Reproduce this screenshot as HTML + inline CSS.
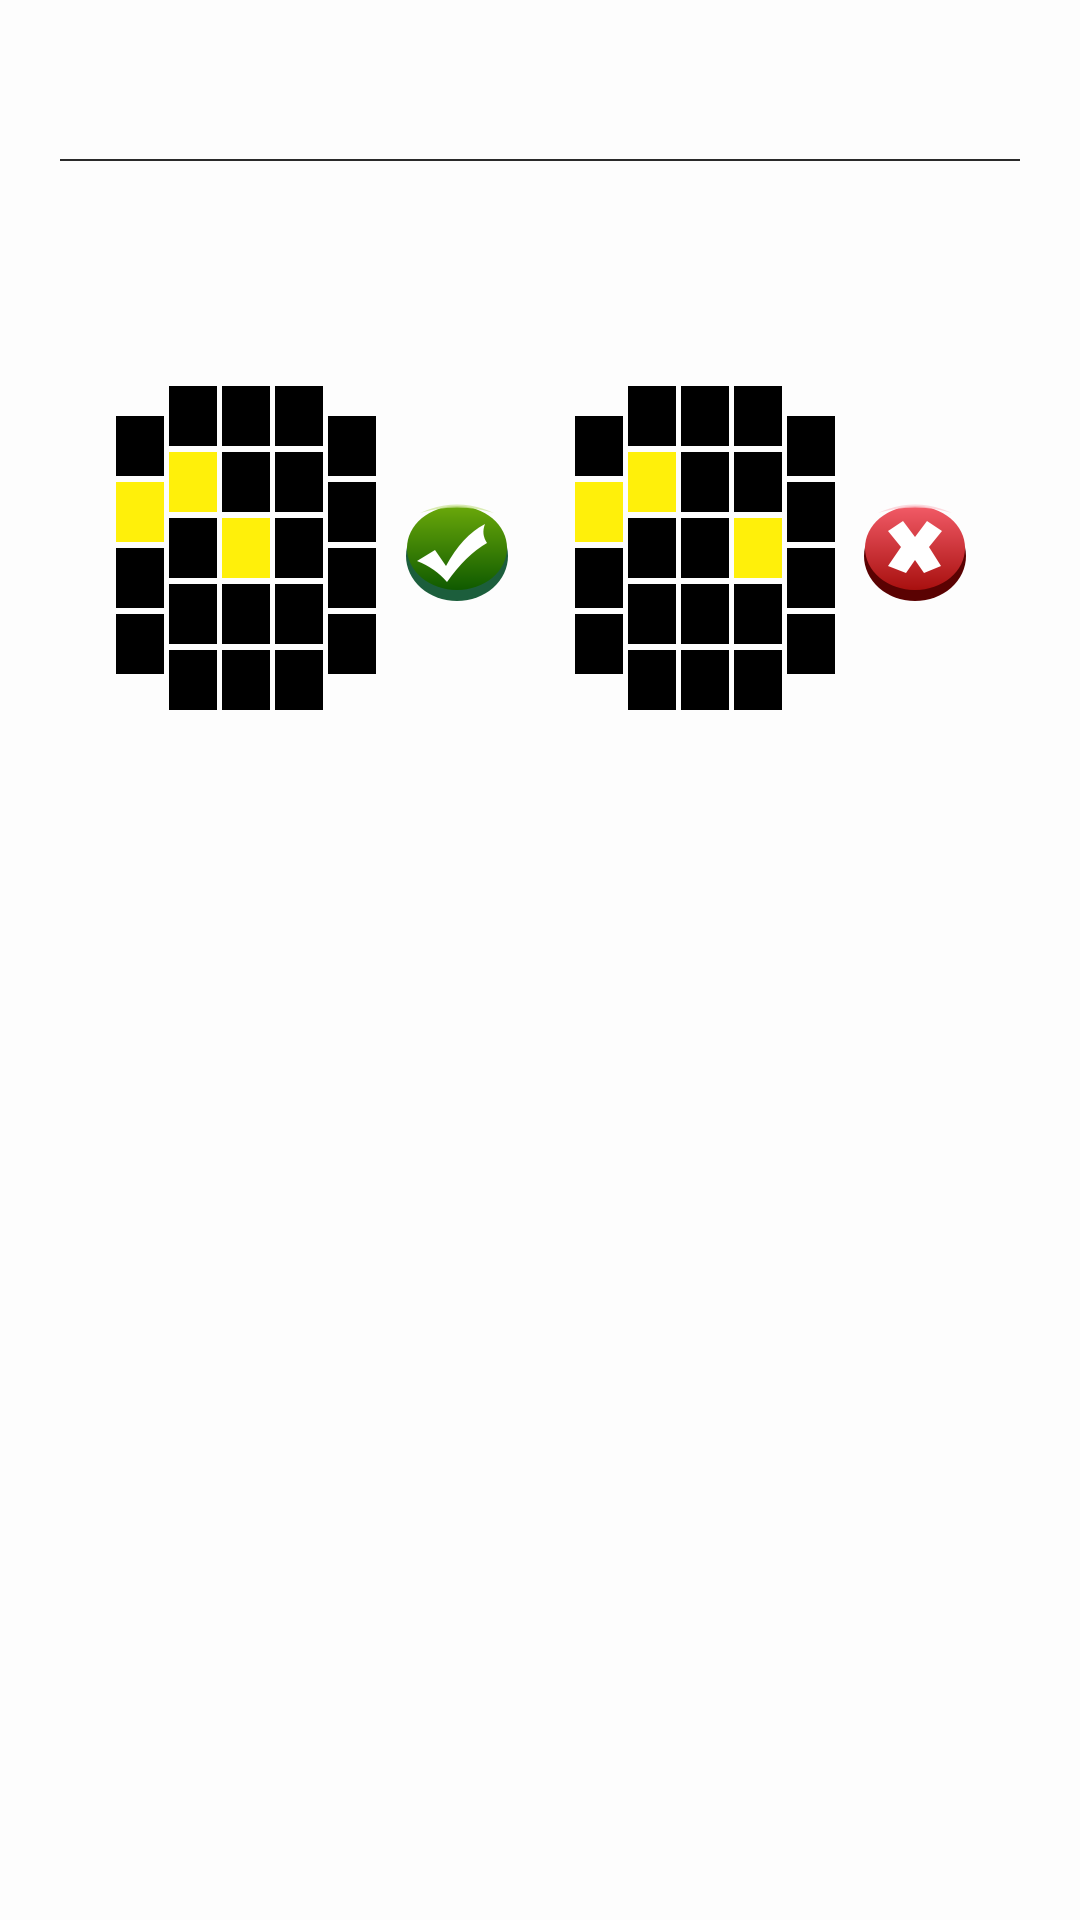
<!DOCTYPE html>
<html><head><meta charset="utf-8"><style>
html,body{margin:0;padding:0;background:#fdfdfd;width:1080px;height:1920px;overflow:hidden}
</style></head><body>
<svg width="1080" height="1920" viewBox="0 0 1080 1920" xmlns="http://www.w3.org/2000/svg">
<defs>
<linearGradient id="g" x1="0" y1="0" x2="0" y2="1"><stop offset="0" stop-color="#6aa80a"/><stop offset="1" stop-color="#0f5a00"/></linearGradient>
<linearGradient id="r" x1="0" y1="0" x2="0" y2="1"><stop offset="0" stop-color="#f25b67"/><stop offset="1" stop-color="#a8100f"/></linearGradient>
</defs>
<rect x="60" y="159" width="960" height="2" fill="#2a2a2a"/>
<g>
<rect x="116" y="416" width="48" height="60" fill="#000"/>
<rect x="116" y="482" width="48" height="60" fill="#fff00a"/>
<rect x="116" y="548" width="48" height="60" fill="#000"/>
<rect x="116" y="614" width="48" height="60" fill="#000"/>
<rect x="328" y="416" width="48" height="60" fill="#000"/>
<rect x="328" y="482" width="48" height="60" fill="#000"/>
<rect x="328" y="548" width="48" height="60" fill="#000"/>
<rect x="328" y="614" width="48" height="60" fill="#000"/>
<rect x="169" y="386" width="48" height="60" fill="#000"/>
<rect x="222" y="386" width="48" height="60" fill="#000"/>
<rect x="275" y="386" width="48" height="60" fill="#000"/>
<rect x="169" y="452" width="48" height="60" fill="#fff00a"/>
<rect x="222" y="452" width="48" height="60" fill="#000"/>
<rect x="275" y="452" width="48" height="60" fill="#000"/>
<rect x="169" y="518" width="48" height="60" fill="#000"/>
<rect x="222" y="518" width="48" height="60" fill="#fff00a"/>
<rect x="275" y="518" width="48" height="60" fill="#000"/>
<rect x="169" y="584" width="48" height="60" fill="#000"/>
<rect x="222" y="584" width="48" height="60" fill="#000"/>
<rect x="275" y="584" width="48" height="60" fill="#000"/>
<rect x="169" y="650" width="48" height="60" fill="#000"/>
<rect x="222" y="650" width="48" height="60" fill="#000"/>
<rect x="275" y="650" width="48" height="60" fill="#000"/>
</g>
<g transform="translate(459,0)">
<rect x="116" y="416" width="48" height="60" fill="#000"/>
<rect x="116" y="482" width="48" height="60" fill="#fff00a"/>
<rect x="116" y="548" width="48" height="60" fill="#000"/>
<rect x="116" y="614" width="48" height="60" fill="#000"/>
<rect x="328" y="416" width="48" height="60" fill="#000"/>
<rect x="328" y="482" width="48" height="60" fill="#000"/>
<rect x="328" y="548" width="48" height="60" fill="#000"/>
<rect x="328" y="614" width="48" height="60" fill="#000"/>
<rect x="169" y="386" width="48" height="60" fill="#000"/>
<rect x="222" y="386" width="48" height="60" fill="#000"/>
<rect x="275" y="386" width="48" height="60" fill="#000"/>
<rect x="169" y="452" width="48" height="60" fill="#fff00a"/>
<rect x="222" y="452" width="48" height="60" fill="#000"/>
<rect x="275" y="452" width="48" height="60" fill="#000"/>
<rect x="169" y="518" width="48" height="60" fill="#000"/>
<rect x="222" y="518" width="48" height="60" fill="#000"/>
<rect x="275" y="518" width="48" height="60" fill="#fff00a"/>
<rect x="169" y="584" width="48" height="60" fill="#000"/>
<rect x="222" y="584" width="48" height="60" fill="#000"/>
<rect x="275" y="584" width="48" height="60" fill="#000"/>
<rect x="169" y="650" width="48" height="60" fill="#000"/>
<rect x="222" y="650" width="48" height="60" fill="#000"/>
<rect x="275" y="650" width="48" height="60" fill="#000"/>
</g>
<ellipse cx="457" cy="556" rx="51" ry="45" fill="#1c5e3c"/>
<ellipse cx="457" cy="548" rx="50" ry="42" fill="url(#g)"/>
<path d="M420 513 Q457 496 494 513 Q457 502 420 513Z" fill="#cfe6a0" opacity="0.8"/>
<path d="M417 561 L435 550 L446 566 Q462 536 485 524 Q481 534 487 543 Q466 555 447 582 Q435 568 417 561Z" fill="#fff"/>
<ellipse cx="915" cy="556" rx="51" ry="45" fill="#5a0202"/>
<ellipse cx="915" cy="548" rx="50" ry="42" fill="url(#r)"/>
<path d="M878 513 Q915 496 952 513 Q915 502 878 513Z" fill="#fbd0d6" opacity="0.8"/>
<path d="M888 531 L903 521 L915 537 L927 521 L942 531 L929 547 L941 566 L924 573 L915 560 L906 573 L888 566 L901 547Z" fill="#fff"/>
</svg>
</body></html>
